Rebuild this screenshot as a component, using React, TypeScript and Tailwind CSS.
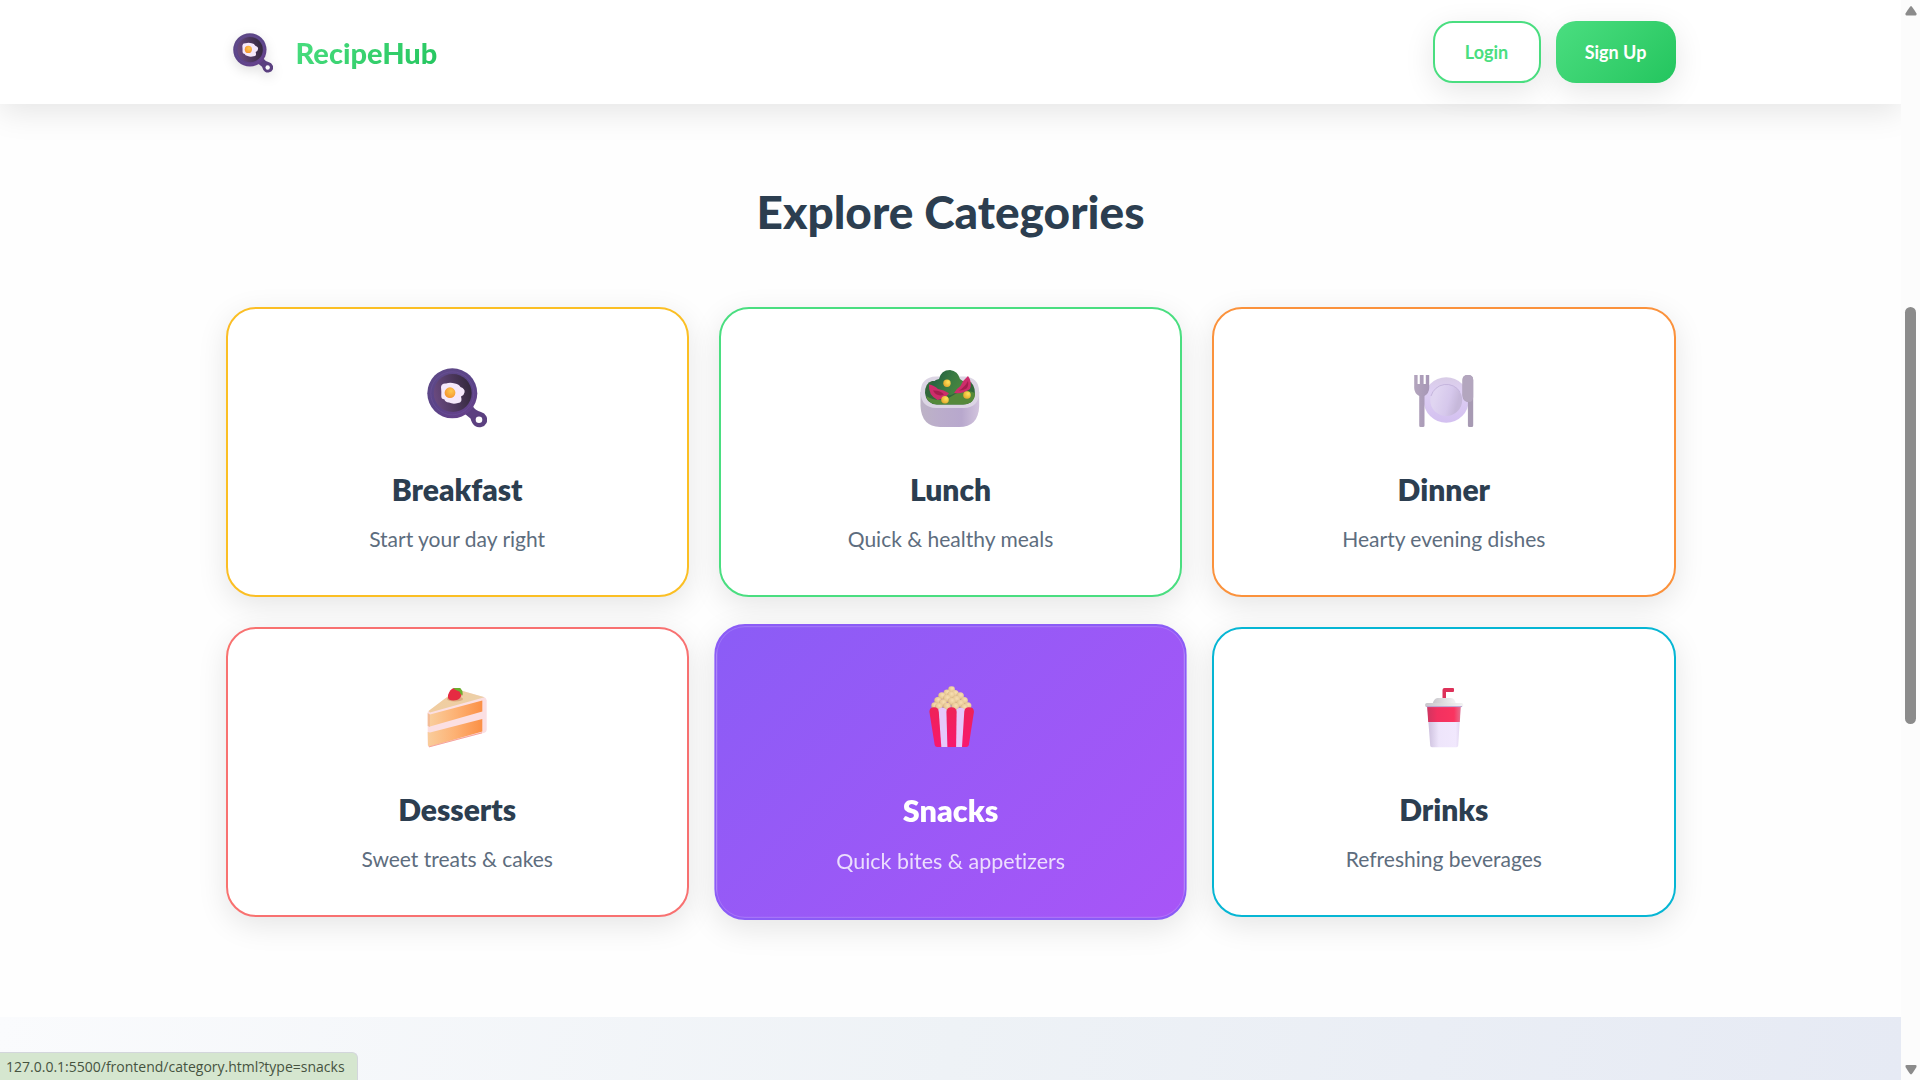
import React from "react";

type IconProps = { className?: string; id?: string };

function PanIcon({ className, id = "pan" }: IconProps) {
  return (
    <svg viewBox="0 0 60 60" className={className} aria-hidden="true">
      <defs>
        <linearGradient id={`${id}-rim`} x1="0" y1="0" x2="0.6" y2="1">
          <stop offset="0" stopColor="#5f4a86" />
          <stop offset="0.6" stopColor="#5a4488" />
          <stop offset="1" stopColor="#64418a" />
        </linearGradient>
        <linearGradient id={`${id}-in`} x1="0" y1="0.6" x2="1" y2="0.4">
          <stop offset="0" stopColor="#6a4a80" />
          <stop offset="0.5" stopColor="#4f3960" />
          <stop offset="1" stopColor="#33283b" />
        </linearGradient>
        <radialGradient id={`${id}-yolk`} cx="0.6" cy="0.35" r="0.7">
          <stop offset="0" stopColor="#ffc94f" />
          <stop offset="1" stopColor="#f3922f" />
        </radialGradient>
      </defs>
      <path d="M38 46 L46 38.500 Q48 42 54 44 A8 8 0 0 1 59.500 55 A8 8 0 0 1 48 58 Q45 56 43.500 50.500 Z" fill="#5b4080" />
      <circle cx="25.300" cy="25.300" r="25" fill={`url(#${id}-rim)`} />
      <circle cx="25.300" cy="25.300" r="21.500" fill="none" stroke="#6c5299" strokeWidth="1" opacity="0.6" />
      <circle cx="25.700" cy="25" r="19" fill={`url(#${id}-in)`} />
      <path d="M14 19 Q14.500 15 19 15.500 Q23 13.800 28 15.500 Q32 16 33.500 19 Q38.500 21 37.500 24.500 Q37 27.500 34 28.500 Q36 35 31 35 Q26 36.500 22 34.500 Q18 34 17.500 31.500 Q14 31 14.300 28 Q14.500 24 14 19 Z" fill="#f5e8fb" />
      <circle cx="23" cy="24.700" r="5.400" fill={`url(#${id}-yolk)`} />
      <circle cx="52" cy="51.700" r="3.300" fill="#fdfdfd" />
    </svg>
  );
}

function SaladIcon({ className }: IconProps) {
  return (
    <svg viewBox="0 0 60 60" className={className} aria-hidden="true">
      <defs>
        <linearGradient id="bowl" x1="0" x2="1" y1="0" y2="0">
          <stop offset="0" stopColor="#bdb3c6" />
          <stop offset="0.3" stopColor="#bbadcb" />
          <stop offset="0.7" stopColor="#b8a8cd" />
          <stop offset="1" stopColor="#d2c4dd" />
        </linearGradient>
        <linearGradient id="leaf" x1="0" x2="1" y1="0.3" y2="0.7">
          <stop offset="0" stopColor="#205c41" />
          <stop offset="0.5" stopColor="#3a7b43" />
          <stop offset="1" stopColor="#4d8b3c" />
        </linearGradient>
        <radialGradient id="corn" cx="0.65" cy="0.35" r="0.7">
          <stop offset="0" stopColor="#ffe45a" />
          <stop offset="1" stopColor="#e5a82d" />
        </radialGradient>
      </defs>
      <path d="M0.500 24 H59.200 V38 Q58.500 59 39 59 H20 Q1.500 58.500 0.500 38 Z" fill="url(#bowl)" />
      <path d="M0.500 24 Q1 9 16 8.500 H44 Q59 9 59.200 24 Q59 39.500 44 40 H16 Q1 39.500 0.500 24 Z" fill="#dcd5e4" />
      <path d="M5 25 Q5 15 12 13 H48 Q55 15 55 26 Q54 36 43 36.500 H17 Q6 36 5 25 Z" fill="#31673a" />
      <path d="M6 28 Q20 36 32 28 Q44 20 55 25 Q55 36 43 36.500 H17 Q8 36 6 28 Z" fill="#55893a" />
      <path d="M10 22 Q12 12 19 11 Q21 2 30 2 Q38 3 40 11 Q47 15 47 23 Q38 23 31 27 Q20 30 10 22 Z" fill="url(#leaf)" />
      <path d="M9 16.500 Q14 17 18 21 Q24 22 29 25.300 Q24 31.500 17.500 32 Q8 27 9 16.500 Z" fill="#cd2d6b" />
      <path d="M13 22.500 Q20 22 24 26.500 Q17 29.500 13 22.500 Z" fill="#a51e4e" />
      <path d="M48 8 Q52.500 14 50 21 Q42 26.500 34 25 Q36 21 40.500 18 Q43 12 48 8 Z" fill="#cd2d6b" />
      <path d="M48 13 Q49 18 46.500 20.500 Q42 23 39 22.500 Q45 19 48 13 Z" fill="#a51e4e" />
      <circle cx="27" cy="15.300" r="3.700" fill="url(#corn)" />
      <circle cx="47" cy="27" r="3.800" fill="url(#corn)" />
      <circle cx="25" cy="31.700" r="3.800" fill="url(#corn)" />
    </svg>
  );
}

function PlateIcon({ className }: IconProps) {
  return (
    <svg viewBox="0 0 60 60" className={className} aria-hidden="true">
      <defs>
        <linearGradient id="plate" x1="0" x2="0" y1="0" y2="1">
          <stop offset="0" stopColor="#d8cce6" />
          <stop offset="0.3" stopColor="#decff3" />
          <stop offset="1" stopColor="#d3c0f0" />
        </linearGradient>
        <linearGradient id="dish" x1="0.1" x2="0.8" y1="0.6" y2="0.8">
          <stop offset="0" stopColor="#e0d5f1" />
          <stop offset="0.6" stopColor="#d6c8ec" />
          <stop offset="1" stopColor="#c6b8da" />
        </linearGradient>
        <linearGradient id="steel" x1="0" x2="1" y1="0" y2="0">
          <stop offset="0" stopColor="#b3a5bd" />
          <stop offset="1" stopColor="#a797b6" />
        </linearGradient>
      </defs>
      <circle cx="32.200" cy="32" r="22.700" fill="url(#plate)" />
      <circle cx="32.200" cy="32" r="16" fill="url(#dish)" />
      <path d="M17 28 A16 16 0 0 1 46 24" fill="none" stroke="#c5b5dd" strokeWidth="1" />
      <path d="M0.200 7 H3.600 V16 H5.800 V7 H9.600 V16 H11.800 V7 H15.200 V20 Q15.200 25 10.500 28 V57.500 Q10.500 59 9 59 H6.500 Q5.200 59 5.200 57.500 V28 Q0.200 25 0.200 20 Z" fill="url(#steel)" />
      <path d="M48.500 12 Q48.500 7 54 7 Q59.200 7 59.200 12 V57.500 Q59.200 59 57.700 59 H55.400 Q53.900 59 53.900 57.500 V34 Q48.500 33 48.500 27 Z" fill="#a79ab3" />
      <path d="M48.500 12 Q48.500 7 54 7 Q59.200 7 59.200 12 V29 Q59 34 55 34 Q49 34 48.500 27 Z" fill="#b3a6be" />
    </svg>
  );
}

function CakeIcon({ className }: IconProps) {
  return (
    <svg viewBox="0 0 60 60" className={className} aria-hidden="true">
      <defs>
        <linearGradient id="sponge" x1="0" x2="1" y1="0" y2="0">
          <stop offset="0" stopColor="#f9cd9c" />
          <stop offset="0.5" stopColor="#fdb173" />
          <stop offset="1" stopColor="#fb9046" />
        </linearGradient>
        <linearGradient id="icing" x1="0" x2="1" y1="0" y2="0.3">
          <stop offset="0" stopColor="#f2cc9d" />
          <stop offset="1" stopColor="#ecd0a8" />
        </linearGradient>
      </defs>
      <path d="M0.700 24 L28 3 Q30 1.500 33 2.300 L57 9 Q59.700 10 59.700 12.500 V42 Q59.500 44 57.500 44.700 L3 59 Q0.700 59.300 0.700 57 Z" fill="#fbdfe2" />
      <path d="M1.500 23 L28 3 Q30 1.500 33 2.300 L57.500 9.300 L3 24.500 Z" fill="url(#icing)" />
      <path d="M3 26.500 L55.300 12.500 V23.500 L3 38.500 Z" fill="url(#sponge)" />
      <path d="M3 44.500 L55.300 31 V43.500 L3 58.500 Q1 58.800 1 57 L0.700 44 Z" fill="url(#sponge)" />
      <path d="M2 58.900 L55 44.800" stroke="#f6a39b" strokeWidth="1" />
      <path d="M0.700 25 L3 26.500 V39 L0.700 38 Z" fill="#f3bd96" />
      <ellipse cx="28" cy="11" rx="8" ry="2.600" fill="#c9875c" opacity="0.5" />
      <path d="M21 7 Q23 1 27 0 Q34 1 34.500 6 Q34.500 10 30 12 Q25 13 22 11.500 Q20.500 10 21 7 Z" fill="#e62b42" />
      <path d="M26 0 Q28 -2.500 32 -1 Q36.500 2 35.500 7.500 Q33 6 32.500 3.500 Q29 3 26 0 Z" fill="#6cae2f" />
    </svg>
  );
}

const kernels: [number, number, number][] = [
  [30.500, 3, 3.300], [26, 6.500, 3.300], [34, 7, 3.500], [30, 8.500, 3.600],
  [21, 9.500, 3.600], [39, 9.500, 3.600], [26, 12, 3.800], [35, 13, 3.800],
  [17, 14, 3.500], [43, 14, 3.500], [30.500, 15, 3.800], [22, 16.500, 3.800],
  [39, 17, 3.800], [14, 19, 3.400], [46.500, 19, 3.500], [18, 20, 3.600],
  [26, 20, 3.800], [34, 20, 3.800], [43, 21, 3.600],
];

function PopcornIcon({ className }: IconProps) {
  return (
    <svg viewBox="0 0 60 60" className={className} aria-hidden="true">
      <defs>
        <radialGradient id="kernel" cx="0.6" cy="0.35" r="0.7">
          <stop offset="0" stopColor="#f8dfb2" />
          <stop offset="0.6" stopColor="#e8c998" />
          <stop offset="1" stopColor="#c89e74" />
        </radialGradient>
        <linearGradient id="stripe" x1="0" x2="0" y1="0" y2="1">
          <stop offset="0" stopColor="#ee2357" />
          <stop offset="1" stopColor="#f8186e" />
        </linearGradient>
      </defs>
      {kernels.map(([x, y, r]) => (
        <circle key={`${x}-${y}`} cx={x} cy={y} r={r} fill="url(#kernel)" />
      ))}
      <path d="M17 24 Q18 21 21.500 21 Q25 21 26 24 L27 59.500 H19.500 Z" fill="#e5c8fb" />
      <path d="M35 24 Q36 21 39.500 21 Q43 21 44 24 L41.500 59.500 H34 Z" fill="#e5c8fb" />
      <path d="M8.800 25 Q9 20.600 13.500 20.600 Q17.500 20.600 18 25 L20.500 59.500 H16.500 Q14.500 59.500 14 57.500 Z" fill="url(#stripe)" />
      <path d="M25.500 25 Q26 20.600 30.500 20.600 Q35 20.600 35.500 25 L35 59.500 H26.500 Z" fill="url(#stripe)" />
      <path d="M43 25 Q43.500 20.600 47.500 20.600 Q52.500 20.600 52.500 25 L47.500 57.500 Q47 59.500 45 59.500 H40.800 Z" fill="url(#stripe)" />
    </svg>
  );
}

function DrinkIcon({ className }: IconProps) {
  return (
    <svg viewBox="0 0 60 60" className={className} aria-hidden="true">
      <defs>
        <linearGradient id="cup" x1="0" x2="1" y1="0" y2="0">
          <stop offset="0" stopColor="#cabddb" />
          <stop offset="0.35" stopColor="#eee5fb" />
          <stop offset="0.85" stopColor="#f1e8fd" />
          <stop offset="1" stopColor="#dfd3ee" />
        </linearGradient>
        <linearGradient id="label" x1="0" x2="1" y1="0" y2="0">
          <stop offset="0" stopColor="#d03560" />
          <stop offset="0.3" stopColor="#f23160" />
          <stop offset="0.8" stopColor="#fa3460" />
          <stop offset="1" stopColor="#e56f8e" />
        </linearGradient>
        <linearGradient id="lid" x1="0" x2="1" y1="0" y2="0">
          <stop offset="0" stopColor="#c9c6cc" />
          <stop offset="0.5" stopColor="#dfdfe0" />
          <stop offset="1" stopColor="#f3f3f3" />
        </linearGradient>
      </defs>
      <path d="M28.500 12 V2 Q28.500 0 30.500 0 H39 Q40 0 40 1 V3 Q40 4 39 4 H32 V12 Z" fill="#dd3159" />
      <path d="M13.200 18 H46.700 L44.200 57.500 Q44 59.200 42.500 59.200 H18 Q16.300 59.200 16.200 57.500 Z" fill="url(#cup)" />
      <path d="M13.200 19 H46.700 L45.800 34 H14.200 Z" fill="url(#label)" />
      <path d="M18.500 16 Q20 10.500 23.500 10 H37 Q41 10.500 42 16 Z" fill="url(#lid)" />
      <rect x="11.200" y="15" width="38" height="4" rx="1.600" fill="url(#lid)" />
      <path d="M12.500 18.600 H48" stroke="#b9a3d1" strokeWidth="1" />
    </svg>
  );
}

type Category = {
  name: string;
  text: string;
  slug: string;
  Icon: (props: IconProps) => React.JSX.Element;
  card: string;
  title: string;
  sub: string;
};

const plain = "bg-white";
const titleDark = "text-[#2c3e50]";
const subDark = "text-[#5d6d7e]";

const categories: Category[] = [
  { name: "Breakfast", text: "Start your day right", slug: "breakfast", Icon: PanIcon, card: `${plain} border-[#fbbf24]`, title: titleDark, sub: subDark },
  { name: "Lunch", text: "Quick & healthy meals", slug: "lunch", Icon: SaladIcon, card: `${plain} border-[#4ade80]`, title: titleDark, sub: subDark },
  { name: "Dinner", text: "Hearty evening dishes", slug: "dinner", Icon: PlateIcon, card: `${plain} border-[#fb923c]`, title: titleDark, sub: subDark },
  { name: "Desserts", text: "Sweet treats & cakes", slug: "desserts", Icon: CakeIcon, card: `${plain} border-[#f87171]`, title: titleDark, sub: subDark },
  { name: "Snacks", text: "Quick bites & appetizers", slug: "snacks", Icon: PopcornIcon, card: "scale-[1.02] border-[#8b5cf6] bg-linear-135 from-[#8b5cf6] to-[#a855f7] inset-ring inset-ring-white/15", title: "text-white", sub: "text-white/80" },
  { name: "Drinks", text: "Refreshing beverages", slug: "drinks", Icon: DrinkIcon, card: `${plain} border-[#06b6d4]`, title: titleDark, sub: subDark },
];

function Header() {
  return (
    <header className="relative z-10 bg-white shadow-[0_8px_30px_rgba(0,0,0,0.1)]">
      <div className="mx-auto flex h-[104px] max-w-[1450px] items-center justify-between">
        <a href="#home" className="flex items-center gap-[23px] pt-px pl-[7px]">
          <PanIcon id="logo" className="size-10 drop-shadow-[0_4px_6px_rgba(0,0,0,0.12)]" />
          <span className="bg-linear-135 from-[#4ade80] to-[#22c55e] bg-clip-text text-[29px] leading-10 font-black text-transparent">
            RecipeHub
          </span>
        </a>
        <nav className="flex gap-[15px] text-lg font-bold">
          <button type="button" className="h-[62px] w-[108px] rounded-[20px] border-2 border-[#4ade80] bg-white text-[#4ade80] shadow-[0_8px_30px_rgba(0,0,0,0.1)]">
            Login
          </button>
          <button type="button" className="h-[62px] w-[120px] rounded-[20px] bg-linear-135 from-[#4ade80] to-[#22c55e] text-white shadow-[0_8px_30px_rgba(0,0,0,0.1)]">
            Sign Up
          </button>
        </nav>
      </div>
    </header>
  );
}

function CategoryCard({ name, text, slug, Icon, card, title, sub }: Category) {
  return (
    <a
      href={`#${slug}`}
      className={`flex flex-col items-center rounded-[30px] border-2 pt-[59px] pb-[42px] shadow-[0_8px_30px_rgba(0,0,0,0.1)] ${card}`}
    >
      <Icon className="size-[60px]" />
      <h3 className={`mt-[43px] text-[30px] leading-9 font-extrabold ${title}`}>{name}</h3>
      <p className={`mt-[18px] text-[21px] leading-7 ${sub}`}>{text}</p>
    </a>
  );
}

function ScrollRail() {
  return (
    <div className="flex w-[19px] shrink-0 flex-col items-center justify-between bg-[#fcfcfc] py-[5px]" aria-hidden="true">
      <svg viewBox="0 0 12 11" className="h-[11px] w-3">
        <path d="M6 1 Q7 1 11.500 8.500 Q12 10.500 10.500 10.500 H1.500 Q0 10.500 0.500 8.500 Q5 1 6 1 Z" fill="#8b8b8b" />
      </svg>
      <div className="flex w-[11px] grow flex-col pt-[291px] pb-[340px]">
        <div className="grow rounded-full bg-[#8b8b8b]" />
      </div>
      <svg viewBox="0 0 12 11" className="h-[11px] w-3">
        <path d="M6 10.500 Q7 10.500 11.500 3 Q12 1 10.500 1 H1.500 Q0 1 0.500 3 Q5 10.500 6 10.500 Z" fill="#8b8b8b" />
      </svg>
    </div>
  );
}

export default function App() {
  return (
    <div className="relative flex h-screen overflow-hidden bg-[#fefefe] font-['Lato',sans-serif] [font-variant-ligatures:none]">
      <div className="flex min-w-0 grow flex-col overflow-hidden">
        <Header />
        <main className="flex grow flex-col">
          <section className="mx-auto w-full max-w-[1450px] pt-20 pb-[100px]">
            <h2 className="text-center text-[46px] leading-14 font-black text-[#2c3e50]">Explore Categories</h2>
            <div className="mt-[67px] grid grid-cols-3 gap-[30px]">
              {categories.map((c) => (
                <CategoryCard key={c.slug} {...c} />
              ))}
            </div>
          </section>
          <section className="grow bg-linear-[100deg] from-[#fafbfd] via-[#eef2f6] to-[#e6eaf4]" />
        </main>
      </div>
      <ScrollRail />
      <div className="absolute bottom-0 left-0 h-7 rounded-tr-md border-t border-r border-[#d3d6dc] bg-[#d5e6cf] pr-3 pl-1.5 font-['Open_Sans',sans-serif] text-sm leading-7 text-[#46533f]">
        127.0.0.1:5500/frontend/category.html?type=snacks
      </div>
    </div>
  );
}
